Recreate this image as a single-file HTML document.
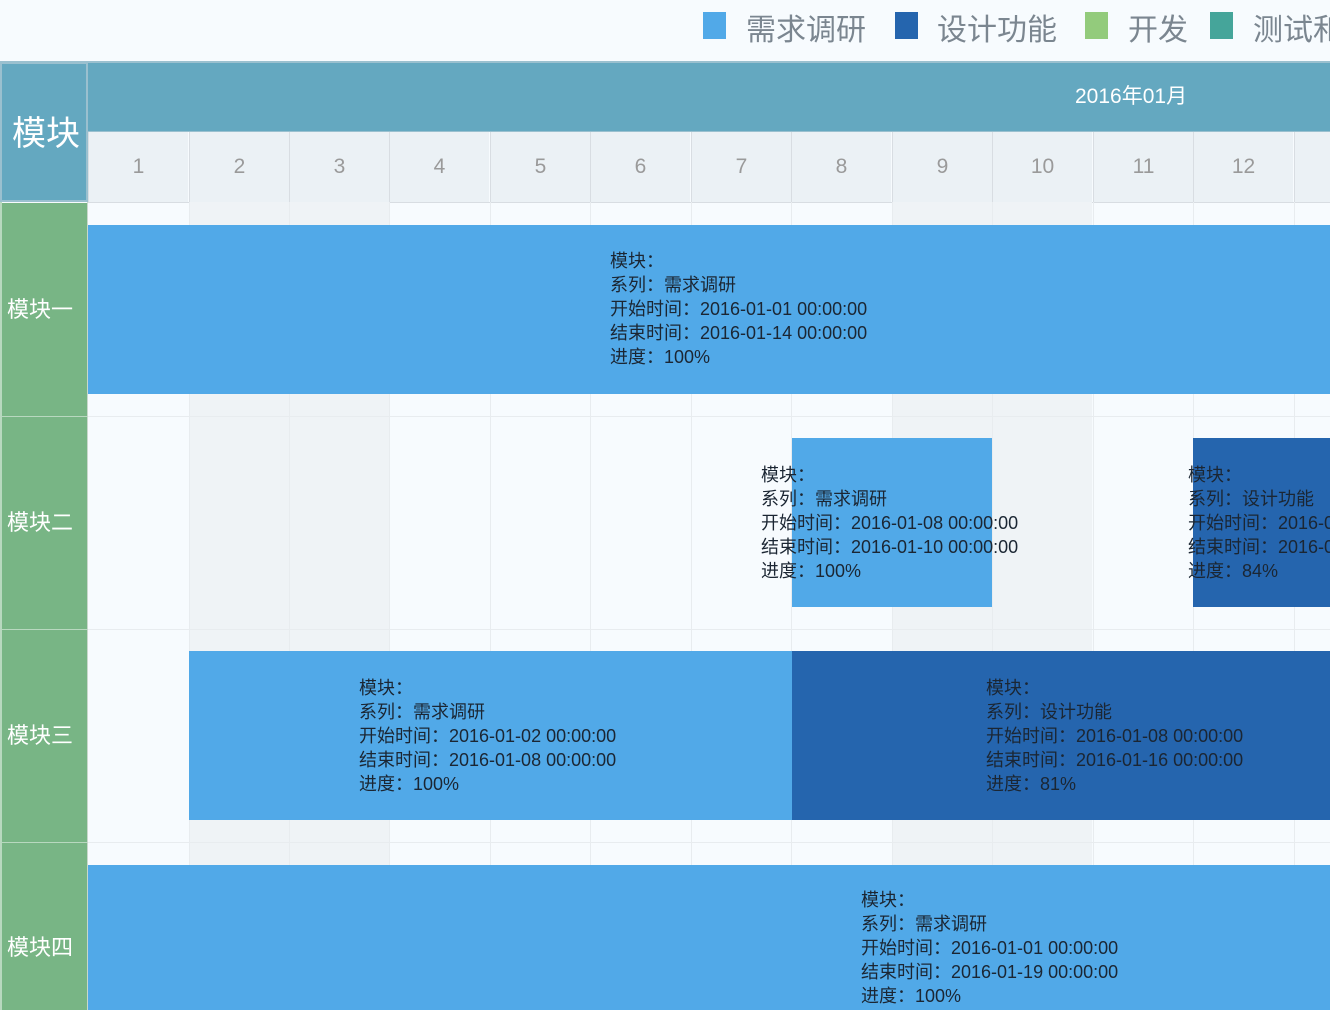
<!DOCTYPE html><html><head><meta charset="utf-8"><style>
*{margin:0;padding:0;box-sizing:border-box}
html{width:1330px;height:1010px;overflow:hidden}
body{width:1330px;height:1010px;overflow:hidden;background:#f7fbfe;position:relative;font-family:"Liberation Sans","Noto Sans CJK SC",sans-serif}
div{position:absolute}
.lg{top:12px;width:23px;height:27px}
.lt{top:5px;font-size:30px;color:#7b8690;white-space:nowrap}
.day{top:132px;height:70px;width:100px;border-left:1px solid #d8dde2;background:#ebf1f5;color:#9a9a9a;font-size:21px;text-align:center;line-height:70px}
.we{top:202px;height:808px;width:200px;background:#eff3f6}
.vl{top:202px;height:808px;width:1px;background:#e8ecef}
.hl{left:88px;width:1242px;height:1px;background:#e8ecef}
.rl{left:2px;width:86px;background:#78b585;color:#fff;font-size:22px;line-height:1;display:flex;align-items:center;padding-left:5px;border-bottom:1px solid #b8d8bf}
.b1{background:#51a9e8}.b2{background:#2565ae}
.t{font-size:18px;line-height:24px;color:#1b2633;white-space:nowrap}
</style></head><body>
<div class="lg" style="left:703px;background:#51a9e8"></div><div class="lt" style="left:746px">需求调研</div>
<div class="lg" style="left:895px;background:#2565ae"></div><div class="lt" style="left:937px">设计功能</div>
<div class="lg" style="left:1085px;background:#93cb7c"></div><div class="lt" style="left:1128px">开发</div>
<div class="lg" style="left:1210px;background:#45a59a"></div><div class="lt" style="left:1253px">测试和</div>

<div style="left:0;top:61px;width:1330px;height:2px;background:#9ac0cf"></div>
<div style="left:0;top:62px;width:88px;height:140px;background:#64a8c0;border:2px solid #9ac0cf;color:#fff;font-size:34px;line-height:140px;padding-left:10px">模块</div>
<div style="left:88px;top:63px;width:1242px;height:69px;background:#64a8c0;color:#fff;font-size:21px;line-height:68px;padding-left:987px">2016年01月</div>
<div style="left:88px;top:131px;width:1242px;height:1px;background:#9ac0cf"></div>

<div class="day" style="left:88px">1</div><div class="day" style="left:189px">2</div><div class="day" style="left:289px">3</div><div class="day" style="left:389px">4</div><div class="day" style="left:490px">5</div><div class="day" style="left:590px">6</div><div class="day" style="left:691px">7</div><div class="day" style="left:791px">8</div><div class="day" style="left:892px">9</div><div class="day" style="left:992px">10</div><div class="day" style="left:1093px">11</div><div class="day" style="left:1193px">12</div><div class="day" style="left:1294px;width:36px"></div>
<div style="left:88px;top:202px;width:1242px;height:1px;background:#d8dde2"></div>

<div class="we" style="left:189px"></div><div class="we" style="left:892px"></div>
<div class="vl" style="left:189px"></div><div class="vl" style="left:289px"></div><div class="vl" style="left:389px"></div><div class="vl" style="left:490px"></div><div class="vl" style="left:590px"></div><div class="vl" style="left:691px"></div><div class="vl" style="left:791px"></div><div class="vl" style="left:892px"></div><div class="vl" style="left:992px"></div><div class="vl" style="left:1093px"></div><div class="vl" style="left:1193px"></div><div class="vl" style="left:1294px"></div>
<div class="hl" style="top:416px"></div><div class="hl" style="top:629px"></div><div class="hl" style="top:842px"></div>

<div style="left:0;top:202px;width:2px;height:808px;background:#b8d8bf"></div>
<div class="rl" style="top:203px;height:214px">模块一</div>
<div class="rl" style="top:417px;height:213px">模块二</div>
<div class="rl" style="top:630px;height:213px">模块三</div>
<div class="rl" style="top:843px;height:167px;border:none;align-items:flex-start;padding-top:94px">模块四</div>
<div style="left:87px;top:202px;width:1px;height:808px;background:#c8d8cc"></div>

<div class="b1" style="left:88px;top:225px;width:1242px;height:169px"></div>
<div class="t" style="left:610px;top:249px">模块：<br>系列：需求调研<br>开始时间：2016-01-01 00:00:00<br>结束时间：2016-01-14 00:00:00<br>进度：100%</div>

<div class="b1" style="left:792px;top:438px;width:200px;height:169px"></div>
<div class="b2" style="left:1193px;top:438px;width:137px;height:169px"></div>
<div class="t" style="left:761px;top:463px">模块：<br>系列：需求调研<br>开始时间：2016-01-08 00:00:00<br>结束时间：2016-01-10 00:00:00<br>进度：100%</div>
<div class="t" style="left:1188px;top:463px;width:142px;overflow:hidden">模块：<br>系列：设计功能<br>开始时间：2016-01-12 00:00:00<br>结束时间：2016-01-14 00:00:00<br>进度：84%</div>

<div class="b1" style="left:189px;top:651px;width:603px;height:169px"></div>
<div class="b2" style="left:792px;top:651px;width:538px;height:169px"></div>
<div class="t" style="left:359px;top:676px">模块：<br>系列：需求调研<br>开始时间：2016-01-02 00:00:00<br>结束时间：2016-01-08 00:00:00<br>进度：100%</div>
<div class="t" style="left:986px;top:676px">模块：<br>系列：设计功能<br>开始时间：2016-01-08 00:00:00<br>结束时间：2016-01-16 00:00:00<br>进度：81%</div>

<div class="b1" style="left:88px;top:865px;width:1242px;height:145px"></div>
<div class="t" style="left:861px;top:888px">模块：<br>系列：需求调研<br>开始时间：2016-01-01 00:00:00<br>结束时间：2016-01-19 00:00:00<br>进度：100%</div>
</body></html>
